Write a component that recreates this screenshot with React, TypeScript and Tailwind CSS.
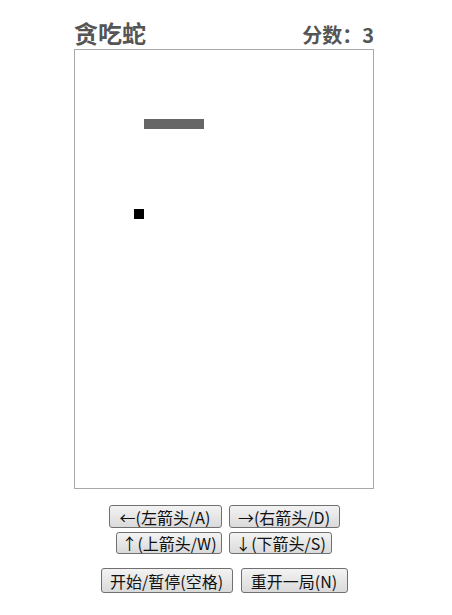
import React from 'react'

const font = { fontFamily: '"Noto Sans CJK SC", "Noto Sans", sans-serif' }

const keyBase =
  'flex items-center justify-center border border-[#707070] rounded-[3px] bg-gradient-to-b from-[#f3f3f3] to-[#dadada] leading-none text-[#111]'

function Key({ label, className }: { label: string; className: string }) {
  return <button className={`${keyBase} ${className}`}>{label}</button>
}

export default function App() {
  const snake = [0, 1, 2, 3, 4, 5]

  return (
    <div className="min-h-screen bg-white" style={font}>
      <div className="ml-[74px] w-[300px] pt-[16px]">
        <div className="flex items-end justify-between h-[31px] pb-[2px]">
          <h1 className="text-[24px] font-bold leading-none text-[#555]">贪吃蛇</h1>
          <span className="text-[20px] font-bold leading-none text-[#555]">分数：3</span>
        </div>

        <div className="relative mt-[2px] w-[300px] h-[440px] border border-[#aaa] bg-white">
          {snake.map((i) => (
            <div
              key={i}
              className="absolute top-[69px] w-[10px] h-[10px] bg-[#666]"
              style={{ left: 69 + i * 10 }}
            />
          ))}
          <div className="absolute left-[59px] top-[159px] w-[10px] h-[10px] bg-black" />
        </div>
      </div>

      <div className="w-[448px] mt-[16px] flex flex-col items-center">
        <div className="flex gap-[7px]">
          <Key label="←(左箭头/A)" className="w-[113px] h-[23px] text-[16px]" />
          <Key label="→(右箭头/D)" className="w-[111px] h-[23px] text-[16px]" />
        </div>
        <div className="flex gap-[7px] mt-[4px]">
          <Key label="↑(上箭头/W)" className="w-[106px] h-[22px] text-[16px]" />
          <Key label="↓(下箭头/S)" className="w-[103px] h-[22px] text-[16px]" />
        </div>
        <div className="flex gap-[8px] mt-[14px]">
          <Key label="开始/暂停(空格)" className="w-[132px] h-[25px] text-[16px]" />
          <Key label="重开一局(N)" className="w-[107px] h-[25px] text-[16px]" />
        </div>
      </div>
    </div>
  )
}
